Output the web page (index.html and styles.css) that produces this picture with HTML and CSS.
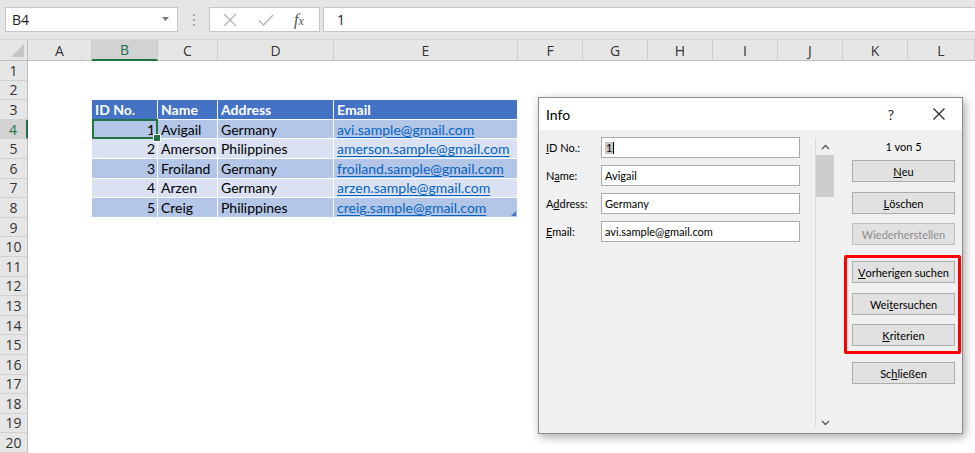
FILE: index.html
```html
<!DOCTYPE html>
<html lang="de">
<head>
<meta charset="utf-8">
<title>Excel Datenmaske</title>
<link rel="stylesheet" href="styles.css">
</head>
<body>
<div class="topbar">
  <div class="namebox"><span>B4</span><svg class="dd" width="8" height="5" viewBox="0 0 8 5"><path d="M0 0H7L3.5 4Z" fill="#7a7a7a"/></svg></div>
  <div class="grip"><i></i><i></i><i></i></div>
  <div class="fxbox">
    <svg width="14" height="14" viewBox="0 0 14 14"><path d="M1 1L13 13M13 1L1 13" stroke="#b3b3b3" stroke-width="1.3" fill="none"/></svg>
    <svg width="16" height="14" viewBox="0 0 16 14"><path d="M1 7.5L5.5 12L15 2" stroke="#b3b3b3" stroke-width="1.4" fill="none"/></svg>
    <span class="fx">f<small>x</small></span>
  </div>
  <div class="formula">1</div>
</div>

<div class="sheet">
  <div class="corner"><svg width="14" height="14" viewBox="0 0 14 14"><path d="M13 0V13H0Z" fill="#c4c4c4"/></svg></div>
  <div class="ch">A</div>
  <div class="ch sel">B</div>
  <div class="ch">C</div>
  <div class="ch">D</div>
  <div class="ch">E</div>
  <div class="ch">F</div>
  <div class="ch">G</div>
  <div class="ch">H</div>
  <div class="ch">I</div>
  <div class="ch">J</div>
  <div class="ch">K</div>
  <div class="ch">L</div>

  <div class="rh">1</div>
  <div class="rh">2</div>
  <div class="rh">3</div>
  <div class="rh sel">4</div>
  <div class="rh">5</div>
  <div class="rh">6</div>
  <div class="rh">7</div>
  <div class="rh">8</div>
  <div class="rh">9</div>
  <div class="rh">10</div>
  <div class="rh">11</div>
  <div class="rh">12</div>
  <div class="rh">13</div>
  <div class="rh">14</div>
  <div class="rh">15</div>
  <div class="rh">16</div>
  <div class="rh">17</div>
  <div class="rh">18</div>
  <div class="rh">19</div>
  <div class="rh">20</div>

  <div class="tbl">
    <div class="c h">ID No.</div><div class="c h">Name</div><div class="c h">Address</div><div class="c h">Email</div>
    <div class="c r1 num cur">1</div><div class="c r1">Avigail</div><div class="c r1">Germany</div><div class="c r1"><span class="link">avi.sample@gmail.com</span></div>
    <div class="c r2 num">2</div><div class="c r2">Amerson</div><div class="c r2">Philippines</div><div class="c r2"><span class="link">amerson.sample@gmail.com</span></div>
    <div class="c r1 num">3</div><div class="c r1">Froiland</div><div class="c r1">Germany</div><div class="c r1"><span class="link">froiland.sample@gmail.com</span></div>
    <div class="c r2 num">4</div><div class="c r2">Arzen</div><div class="c r2">Germany</div><div class="c r2"><span class="link">arzen.sample@gmail.com</span></div>
    <div class="c r1 num">5</div><div class="c r1">Creig</div><div class="c r1">Philippines</div><div class="c r1 last"><span class="link">creig.sample@gmail.com</span></div>
  </div>
</div>

<div class="dlg">
  <div class="dlg-title">
    <span class="ttl">Info</span>
    <span class="help">?</span>
    <svg class="close" width="12" height="12" viewBox="0 0 12 12"><path d="M0.5 0.5L11.5 11.5M11.5 0.5L0.5 11.5" stroke="#222" stroke-width="1.1" fill="none"/></svg>
  </div>
  <div class="dlg-body">
    <div class="form">
      <div class="field"><span class="lbl"><u>I</u>D No.:</span><div class="inp"><span class="hl">1</span><span class="caret"></span></div></div>
      <div class="field"><span class="lbl">N<u>a</u>me:</span><div class="inp">Avigail</div></div>
      <div class="field"><span class="lbl">A<u>d</u>dress:</span><div class="inp">Germany</div></div>
      <div class="field"><span class="lbl"><u>E</u>mail:</span><div class="inp">avi.sample@gmail.com</div></div>
    </div>
    <div class="scroll">
      <svg class="arr" width="9" height="6" viewBox="0 0 9 6"><path d="M1 5L4.5 1.5L8 5" stroke="#555" stroke-width="1.3" fill="none"/></svg>
      <div class="thumb"></div>
      <div class="sp"></div>
      <svg class="arr" width="9" height="6" viewBox="0 0 9 6"><path d="M1 1L4.5 4.5L8 1" stroke="#555" stroke-width="1.3" fill="none"/></svg>
    </div>
    <div class="actions">
      <div class="count">1 von 5</div>
      <div class="btn b-neu"><u>N</u>eu</div>
      <div class="btn b-gap"><u>L</u>öschen</div>
      <div class="btn b-gap2 dis">Wiederherstellen</div>
      <div class="mark">
        <div class="btn"><u>V</u>orherigen suchen</div>
        <div class="btn b-gap">Wei<u>t</u>ersuchen</div>
        <div class="btn b-gap2"><u>K</u>riterien</div>
      </div>
      <div class="btn b-close">Sc<u>h</u>ließen</div>
    </div>
  </div>
</div>
</body>
</html>
```

FILE: styles.css
```css
* { box-sizing: border-box; }
html, body { margin: 0; padding: 0; }
body {
  width: 975px;
  height: 453px;
  overflow: hidden;
  background: #fff;
  font-family: "Open Sans", "Noto Sans", sans-serif;
  position: relative;
}

/* ---------- formula bar ---------- */
.topbar {
  height: 40px;
  background: #e6e6e6;
  border-bottom: 1px solid #d2d2d2;
  display: flex;
  align-items: flex-start;
  padding: 7px 0 0 5px;
}
.namebox {
  width: 173px;
  height: 25px;
  background: #fff;
  border: 1px solid #c6c6c6;
  display: flex;
  align-items: center;
  justify-content: space-between;
  padding: 0 7px 0 6px;
  font-size: 14px;
  color: #222;
}
.grip {
  width: 31px;
  height: 25px;
  display: flex;
  flex-direction: column;
  align-items: center;
  justify-content: center;
  gap: 3px;
}
.grip i {
  display: block;
  width: 2px;
  height: 2px;
  background: #a6a6a6;
}
.fxbox {
  width: 111px;
  height: 25px;
  background: #fff;
  border: 1px solid #c6c6c6;
  display: flex;
  align-items: center;
  padding-left: 13px;
  gap: 21px;
}
.fx {
  font-family: "Liberation Serif", serif;
  font-style: italic;
  font-size: 16px;
  color: #555;
  margin-left: -1px;
}
.fx small { font-size: 12px; }
.formula {
  flex: 1;
  height: 25px;
  margin-left: 3px;
  background: #fff;
  border: 1px solid #c6c6c6;
  border-right: none;
  display: flex;
  align-items: center;
  padding-left: 13px;
  font-size: 14px;
  color: #222;
}

/* ---------- sheet ---------- */
.sheet {
  display: grid;
  grid-template-columns: 28px 64px 66px 60px 116px 184px repeat(6, 65px) 67px;
  grid-template-rows: 21px repeat(20, 19.6px);
}
.corner {
  background: #e6e6e6;
  border-right: 1px solid #bdbdbd;
  border-bottom: 1px solid #bdbdbd;
  display: flex;
  align-items: flex-end;
  justify-content: flex-end;
  padding: 0 2px 2px 0;
}
.ch {
  background: #e6e6e6;
  border-bottom: 1px solid #bdbdbd;
  border-right: 1px solid #cdcdcd;
  display: flex;
  align-items: center;
  justify-content: center;
  font-size: 14px;
  color: #333;
}
.ch.sel {
  background: #d2d2d2;
  color: #217346;
  border-bottom: 2px solid #217346;
}
.rh {
  grid-column: 1;
  background: #e6e6e6;
  border-right: 1px solid #bdbdbd;
  border-bottom: 1px solid #d0d0d0;
  display: flex;
  align-items: center;
  justify-content: center;
  font-size: 14px;
  color: #333;
}
.rh.sel {
  background: #d2d2d2;
  color: #217346;
  border-right: 2px solid #217346;
}

/* ---------- table ---------- */
.tbl {
  grid-column: 3 / 7;
  grid-row: 4 / 10;
  display: grid;
  grid-template-columns: 66px 60px 116px 184px;
  grid-template-rows: repeat(6, 1fr);
  font-family: "Lato", "Liberation Sans", sans-serif;
  font-size: 14px;
  color: #000;
}
.c {
  border-right: 1px solid #fff;
  border-bottom: 1px solid #fff;
  display: flex;
  align-items: center;
  padding: 0 2px 0 3px;
  white-space: nowrap;
}
.h { background: #4472c4; color: #fff; font-weight: bold; }
.r1 { background: #b4c6e7; }
.r2 { background: #d9e1f2; }
.num { justify-content: flex-end; }
.link { color: #0563c1; text-decoration: underline; text-underline-offset: 2px; }
.cur { position: relative; }
.cur::after {
  content: "";
  position: absolute;
  left: 0; top: -1px; right: -1px; bottom: -1px;
  border: 2px solid #217346;
}
.cur::before {
  content: "";
  position: absolute;
  right: -4px; bottom: -4px;
  width: 6px; height: 6px;
  background: #217346;
  border: 1px solid #fff;
  z-index: 1;
}
.last { position: relative; }
.last::after {
  content: "";
  position: absolute;
  right: 1px; bottom: 1px;
  width: 0; height: 0;
  border-left: 5px solid transparent;
  border-bottom: 5px solid #4472c4;
}

/* ---------- dialog ---------- */
.dlg {
  position: absolute;
  left: 538px;
  top: 97px;
  width: 425px;
  height: 337px;
  border: 1px solid #8c8c8c;
  background: #f0f0f0;
  box-shadow: 2px 3px 9px rgba(0, 0, 0, 0.35);
  display: flex;
  flex-direction: column;
  font-family: "Lato", "Noto Sans", sans-serif;
  font-size: 11px;
  color: #000;
}
.dlg-title {
  height: 32px;
  flex: none;
  background: #fff;
  display: flex;
  align-items: center;
  padding: 0 17px 0 7px;
}
.ttl { font-size: 14px; flex: 1; }
.help { font-size: 14px; margin-right: 39px; color: #222; }
.dlg-body { flex: 1; display: flex; }
.form {
  width: 276px;
  padding: 7px 0 0 7px;
  display: flex;
  flex-direction: column;
  gap: 7px;
}
.field { display: flex; align-items: center; height: 21px; }
.lbl { width: 55px; }
.inp {
  width: 199px;
  height: 21px;
  background: #fff;
  border: 1px solid #adadad;
  display: flex;
  align-items: center;
  padding-left: 3px;
}
.hl { background: #c8c8c8; padding: 0 1px; line-height: 12px; }
.caret { display: inline-block; width: 1px; height: 12px; background: #000; }
.scroll {
  width: 19px;
  margin: 8px 0 7px;
  border-left: 1px solid #dadada;
  display: flex;
  flex-direction: column;
  align-items: center;
  padding-top: 6px;
}
.thumb {
  width: 18px;
  height: 42px;
  margin-top: 5px;
  background: #cdcdcd;
}
.sp { flex: 1; }
.actions {
  flex: 1;
  display: flex;
  flex-direction: column;
  padding: 9px 7px 0 18px;
}
.count { height: 16px; line-height: 16px; text-align: center; }
.btn {
  height: 22px;
  background: #e1e1e1;
  border: 1px solid #adadad;
  display: flex;
  align-items: center;
  justify-content: center;
  white-space: nowrap;
}
.btn.dis { color: #8d8d8d; border-color: #bfbfbf; }
.b-neu { margin-top: 5px; }
.b-gap { margin-top: 10px; }
.b-gap2 { margin-top: 9px; }
.mark {
  margin: 10px -6px 0 -8px;
  border: 3px solid #ff0000;
  border-radius: 2px;
  padding: 3px 3px 5px 5px;
  display: flex;
  flex-direction: column;
}
.b-close { margin-top: 8px; }
```
